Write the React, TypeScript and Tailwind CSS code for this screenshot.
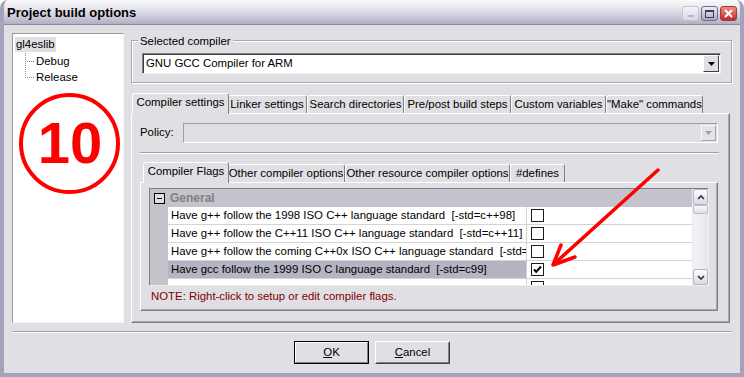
import React from 'react';

const font = { fontFamily: '"Liberation Sans", Arial, sans-serif' };

const Tab: React.FC<{ label: string; w: string; active?: boolean }> = ({ label, w, active }) => (
  <div
    className={`${w} flex items-center justify-center whitespace-nowrap rounded-t-[3px] border-l border-t border-r border-l-white border-t-white border-r-[#808080] bg-[#e0dfe3] ${
      active ? 'h-[21px] -mb-px relative z-10 -mr-[2px] pb-[2px]' : 'h-[18px]'
    }`}
  >
    {label}
  </div>
);

const DropArrow: React.FC<{ disabled?: boolean }> = ({ disabled }) => (
  <svg width="7" height="4" viewBox="0 0 7 4">
    <path d="M0 0h7L3.5 4z" fill={disabled ? '#a0a0a0' : '#000'} />
  </svg>
);

const CheckBox: React.FC<{ checked?: boolean }> = ({ checked }) => (
  <div className="w-[13px] h-[13px] border border-[#1c1c1c] bg-white flex items-center justify-center">
    {checked && (
      <svg width="9" height="9" viewBox="0 0 9 9">
        <path d="M1 4.5l2.2 2.3L8 1.5" stroke="#000" strokeWidth="2" fill="none" />
      </svg>
    )}
  </div>
);

const flags = [
  'Have g++ follow the 1998 ISO C++ language standard  [-std=c++98]',
  'Have g++ follow the C++11 ISO C++ language standard  [-std=c++11]',
  'Have g++ follow the coming C++0x ISO C++ language standard  [-std=c++0x]',
  'Have gcc follow the 1999 ISO C language standard  [-std=c99]',
  'Have gcc follow the 2011 ISO C language standard  [-std=c11]',
];

const App: React.FC = () => {
  return (
    <div
      className="relative w-[744px] h-[377px] overflow-hidden bg-[#e0dfe3] text-[11.4px] text-black flex flex-col rounded-t-[8px] border-x-4 border-b-4 border-[#a3a3bb]"
      style={font}
    >
      {/* title bar */}
      <div className="h-[25px] -mx-[4px] px-[7px] flex items-center justify-between rounded-t-[8px] bg-gradient-to-b from-[#fbfbfd] via-[#dcdce6] to-[#b0b0c4] border-b border-[#8a8aa4]">
        <span className="text-[13px] font-bold pt-[2px]">Project build options</span>
        <div className="flex gap-[2px] pt-[3px]">
          <div className="w-[17px] h-[15px] rounded-[3px] border border-[#c4c4d2] bg-gradient-to-b from-[#f4f4f8] to-[#d8d8e2] flex items-end justify-center pb-[3px]">
            <div className="w-[6px] h-[2px] bg-[#b8b8c4]" />
          </div>
          <div className="w-[17px] h-[15px] rounded-[3px] border border-[#6c6c8c] bg-gradient-to-b from-[#f0f0f6] to-[#a8a8c0] flex items-center justify-center">
            <div className="w-[9px] h-[8px] border border-[#3c3c54] border-t-2" />
          </div>
          <div className="w-[17px] h-[15px] rounded-[3px] border border-[#9a3a3a] bg-gradient-to-b from-[#f08a80] to-[#c02828] flex items-center justify-center">
            <svg width="9" height="9" viewBox="0 0 9 9">
              <path d="M1 1l7 7M8 1L1 8" stroke="#fff" strokeWidth="2" />
            </svg>
          </div>
        </div>
      </div>

      {/* body */}
      <div className="flex-1 flex flex-col px-[8px] pt-[8px]">
        <div className="flex gap-[7px] h-[290px]">
          {/* tree */}
          <div className="w-[112px] h-full bg-white border border-[#9a9a9a] border-r-[#f4f4ee] border-b-[#f4f4ee] pt-[2px] pl-[2px]">
            <div className="inline-block bg-[#e0dfe3] px-[1px] h-[15px] leading-[15px]">gl4eslib</div>
            <div className="relative pl-[21px] flex flex-col">
              <div className="absolute left-[10px] top-0 h-[25px] border-l border-dotted border-[#8a8a8a]" />
              <div className="h-[16px] flex items-center">
                <div className="absolute left-[10px] w-[9px] border-t border-dotted border-[#8a8a8a]" />
                Debug
              </div>
              <div className="h-[16px] flex items-center">
                <div className="absolute left-[10px] w-[9px] border-t border-dotted border-[#8a8a8a]" />
                Release
              </div>
            </div>
          </div>

          {/* right column */}
          <div className="flex-1 flex flex-col">
            {/* selected compiler group */}
            <div className="relative mt-[7px] h-[43px] border border-[#a8a8b0] shadow-[inset_1px_1px_0_#fff,1px_1px_0_#fff] px-[10px] pt-[12px]">
              <span className="absolute -top-[8px] left-[6px] bg-[#e0dfe3] px-[2px]">Selected compiler</span>
              <div className="h-[21px] bg-white border border-[#808080] border-r-[#f0f0f0] border-b-[#f0f0f0] shadow-[inset_1px_1px_0_#404040] flex items-center pl-[3px] pr-[1px]">
                <span className="flex-1">GNU GCC Compiler for ARM</span>
                <div className="w-[16px] h-[17px] bg-[#e0dfe3] border border-white border-r-[#404040] border-b-[#404040] flex items-center justify-center">
                  <DropArrow />
                </div>
              </div>
            </div>

            {/* notebook */}
            <div className="mt-[9px] flex flex-col flex-1">
              <div className="flex items-end h-[21px] pl-[1px]">
                <Tab label="Compiler settings" w="w-[97px]" active />
                <Tab label="Linker settings" w="w-[80px]" />
                <Tab label="Search directories" w="w-[97px]" />
                <Tab label="Pre/post build steps" w="w-[107px]" />
                <Tab label="Custom variables" w="w-[95px]" />
                <Tab label={'"Make" commands'} w="w-[97px]" />
              </div>
              <div className="flex-1 mr-[2px] border border-white border-r-[#808080] border-b-[#808080] shadow-[inset_-1px_-1px_0_#a8a8a8] px-[8px] pt-[9px]">
                <div className="flex items-center h-[20px]">
                  <span className="w-[43px]">Policy:</span>
                  <div className="flex-1 mr-[3px] h-[20px] border border-[#a0a0a0] border-r-white border-b-white flex items-center justify-end pr-[1px]">
                    <div className="w-[15px] h-[16px] bg-[#e4e3e8] border border-[#f8f8f8] border-r-[#a8a8a8] border-b-[#a8a8a8] flex items-center justify-center">
                      <DropArrow disabled />
                    </div>
                  </div>
                </div>
                <div className="mt-[9px] mr-[2px] border-t border-[#a0a0a0] border-b border-b-white" />

                {/* inner notebook */}
                <div className="mt-[7px] flex flex-col h-[150px]">
                  <div className="flex items-end h-[21px] pl-[3px]">
                    <Tab label="Compiler Flags" w="w-[86px]" active />
                    <Tab label="Other compiler options" w="w-[118px]" />
                    <Tab label="Other resource compiler options" w="w-[165px]" />
                    <Tab label="#defines" w="w-[55px]" />
                  </div>
                  <div className="flex-1 mr-[3px] border border-white border-r-[#808080] border-b-[#808080] shadow-[inset_-1px_-1px_0_#a8a8a8] px-[8px] pt-[5px]">
                    {/* property grid */}
                    <div className="h-[98px] flex border border-[#808080] border-r-[#f0f0f0] border-b-[#f0f0f0] bg-white overflow-hidden">
                      <div className="flex-1 flex flex-col overflow-hidden">
                        <div className="h-[18px] shrink-0 bg-[#c4c4cc] flex items-center">
                          <div className="w-[18px] flex justify-center">
                            <div className="w-[11px] h-[11px] border border-black bg-[#e0dfe3] flex items-center justify-center">
                              <div className="w-[5px] h-px bg-black" />
                            </div>
                          </div>
                          <span className="font-bold text-[#808080] text-[12px] pl-[2px]">General</span>
                        </div>
                        {flags.map((f, i) => (
                          <div key={i} className="h-[18px] shrink-0 flex">
                            <div className="w-[18px] bg-[#c4c4cc]" />
                            <div
                              className={`w-[359px] border-b border-r border-[#d4d4d8] whitespace-pre overflow-hidden px-[3px] flex items-center ${
                                i === 3 ? 'bg-[#b4b4c2]' : ''
                              } ${i === 4 ? 'pt-[6px]' : ''}`}
                            >
                              {f}
                            </div>
                            <div className="flex-1 border-b border-[#d4d4d8] flex items-center pl-[4px]">
                              <CheckBox checked={i === 3} />
                            </div>
                          </div>
                        ))}
                      </div>
                      {/* scrollbar */}
                      <div className="w-[16px] flex flex-col bg-gradient-to-r from-[#f3f3f6] to-[#e6e6ee] border-l border-[#ececf0]">
                        <div className="h-[16px] rounded-[2px] border border-[#b4b4c4] bg-gradient-to-b from-[#fbfbfd] to-[#dadae4] flex items-center justify-center">
                          <svg width="8" height="5" viewBox="0 0 8 5">
                            <path d="M1 4l3-3 3 3" stroke="#2c2c3c" strokeWidth="1.6" fill="none" />
                          </svg>
                        </div>
                        <div className="h-[9px] rounded-[2px] border border-[#c0c0cc] bg-gradient-to-b from-[#fafafc] to-[#dcdce6]" />
                        <div className="flex-1" />
                        <div className="h-[16px] rounded-[2px] border border-[#b4b4c4] bg-gradient-to-b from-[#fbfbfd] to-[#dadae4] flex items-center justify-center">
                          <svg width="8" height="5" viewBox="0 0 8 5">
                            <path d="M1 1l3 3 3-3" stroke="#2c2c3c" strokeWidth="1.6" fill="none" />
                          </svg>
                        </div>
                      </div>
                    </div>
                    <div className="mt-[2px] pl-[2px] text-[#800000]">NOTE: Right-click to setup or edit compiler flags.</div>
                  </div>
                </div>
              </div>
            </div>
          </div>
        </div>

        {/* separator */}
        <div className="mt-[8px] border-t border-[#a0a0a8] border-b border-b-white" />

        {/* buttons */}
        <div className="flex justify-center gap-[6px] mt-[8px]">
          <div className="w-[75px] h-[23px] border border-black flex">
            <div className="flex-1 border border-white border-r-[#808080] border-b-[#808080] flex items-center justify-center">
              <span><span className="underline">O</span>K</span>
            </div>
          </div>
          <div className="w-[75px] h-[23px] border border-white border-r-[#404040] border-b-[#404040] flex">
            <div className="flex-1 border border-transparent border-r-[#808080] border-b-[#808080] flex items-center justify-center">
              <span><span className="underline">C</span>ancel</span>
            </div>
          </div>
        </div>
      </div>

      {/* annotation: circled 10 */}
      <div className="absolute left-[15px] top-[93px] w-[101px] h-[101px] rounded-full border-[4px] border-[#ff0000] flex items-center justify-center">
        <span className="text-[58px] font-bold text-[#ff0000] leading-none -mt-[2px] ml-[1px]">10</span>
      </div>

      {/* annotation: red arrow */}
      <svg className="absolute left-0 top-0 pointer-events-none" width="744" height="377">
        <path d="M654 170L550 264" stroke="#ff0000" strokeWidth="3.5" strokeLinecap="round" fill="none" />
        <path d="M557 245L549 265L571 257" stroke="#ff0000" strokeWidth="3.5" strokeLinecap="round" strokeLinejoin="round" fill="none" />
      </svg>
    </div>
  );
};

export default App;
